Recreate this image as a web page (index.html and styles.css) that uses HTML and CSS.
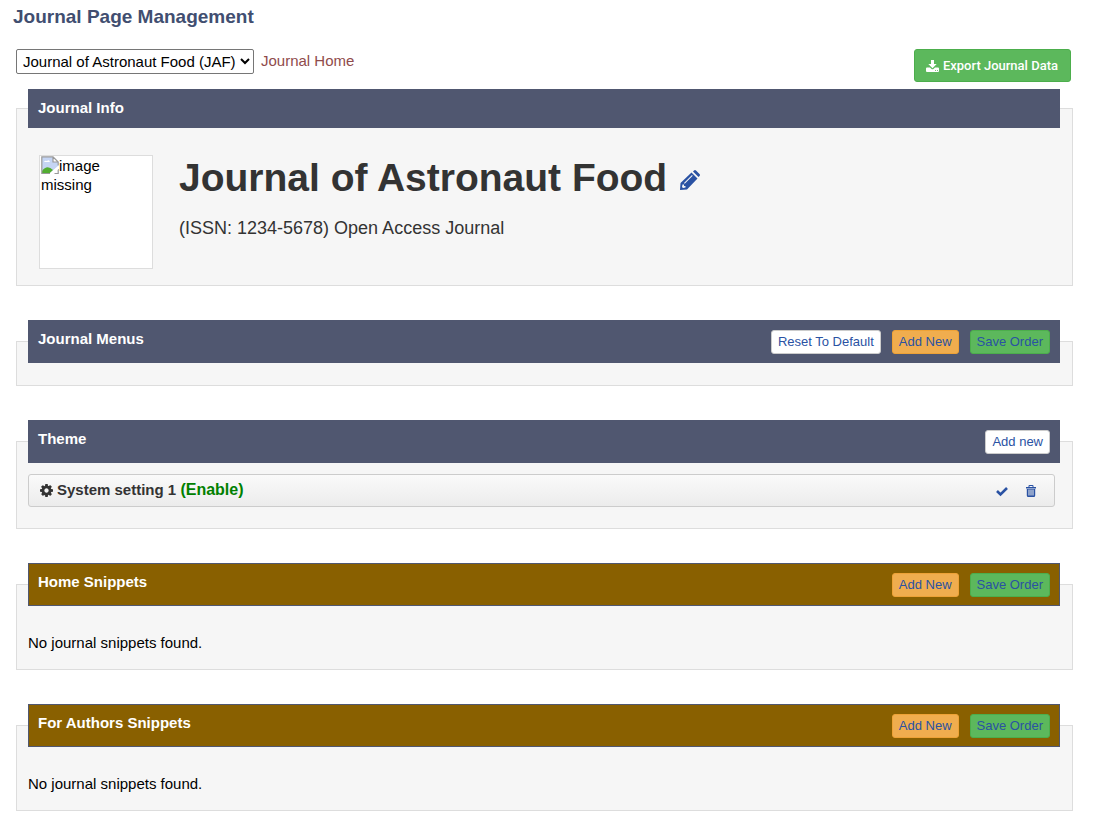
FILE: index.html
```html
<!DOCTYPE html>
<html lang="en">
<head>
<meta charset="utf-8">
<title>Journal Page Management</title>
<link rel="stylesheet" href="styles.css">
</head>
<body>
<main class="page">
  <h2 class="page-title">Journal Page Management</h2>
  <div class="toolbar">
    <select class="journal-select" aria-label="Journal"><option>Journal of Astronaut Food (JAF)</option></select>
    <a class="home-link" href="#">Journal Home</a>
    <button class="btn-export" type="button">
      <svg class="icon-download" viewBox="0 0 13 12" aria-hidden="true"><path fill="currentColor" fill-rule="evenodd" d="M5 0h3v4h2.700L6.500 8.200 2.300 4H5zM1 7.500h3l1.300 1.300q1.200 1 2.400 0L9 7.500h3q1 0 1 1V11q0 1-1 1H1q-1 0-1-1V8.500q0-1 1-1zM9 10v1h.8v-1zM11 10v1h.8v-1z"/></svg>
      Export Journal Data
    </button>
  </div>

  <fieldset class="panel">
    <legend class="panel-head panel-head-plain"><span class="bar"><span>Journal Info</span></span></legend>
    <div class="info">
      <div class="cover">
        <svg class="icon-broken" viewBox="0 0 18 18" role="img" aria-label="Broken image"><path d="M1 1h11l5 5v4L9 17H1z" fill="#c5d5f4"/><path d="M3 6q1-2 3-1 2-2 3 1z" fill="#fff"/><path d="M1 17v-2q5-7 11-1l-3 3z" fill="#52ad32"/><path d="M12 1v5h5z" fill="#fff"/><path d="M9 17.500H.8V.8H12l5.200 5.200v3.500M12 1v5h5M13.500 17.500h3.700v-4.500" fill="none" stroke="#999" stroke-width="1.200"/><path d="M9 17l8.500-7v3L13 17z" fill="#fff"/></svg>image missing
      </div>
      <div>
        <h1 class="journal-name">Journal of Astronaut Food
          <a class="edit" href="#" aria-label="Edit journal"><svg class="icon-pencil" viewBox="0 0 20 20" aria-hidden="true"><path fill="currentColor" fill-rule="evenodd" d="M0 20l.5-7L11.500 2.500l6 6L7 19.500zM13 1.500l1-1q1-1 2 0l3.500 3.500q1 1 0 2l-1 1zM2.500 14.500L2 17l1 1 2.500-.5V16H4v-1.500zM4 13l8-8 .7.700-8 8z"/></svg></a></h1>
        <p class="issn">(ISSN: 1234-5678) Open Access Journal</p>
      </div>
    </div>
  </fieldset>

  <fieldset class="panel">
    <legend class="panel-head"><span class="bar"><span>Journal Menus</span>
      <span class="actions"><button class="btn" type="button">Reset To Default</button><button class="btn btn-add" type="button">Add New</button><button class="btn btn-save" type="button">Save Order</button></span></span></legend>
    <div class="empty"></div>
  </fieldset>

  <fieldset class="panel">
    <legend class="panel-head"><span class="bar"><span>Theme</span>
      <span class="actions"><button class="btn" type="button">Add new</button></span></span></legend>
    <div class="setting">
      <svg class="icon-cog" viewBox="0 0 1536 1536" aria-hidden="true"><path fill="currentColor" d="M1024 768q0-106-75-181t-181-75-181 75-75 181 75 181 181 75 181-75 75-181zm512-109v222q0 12-8 23t-20 13l-185 28q-19 54-39 91 35 50 107 138 10 12 10 25t-9 23q-27 37-99 108t-94 71q-12 0-26-9l-138-108q-44 23-91 38-16 136-29 186-7 28-36 28H657q-14 0-24.500-8.500T621 1506l-28-184q-49-16-90-37l-141 107q-10 9-25 9-14 0-25-11-126-114-165-168-7-10-7-23 0-12 8-23 15-21 51-66.500t54-70.500q-27-50-41-99L29 913q-13-2-21-12.500T0 877V655q0-12 8-23t19-13l186-28q14-46 39-92-40-57-107-138-10-12-10-24 0-10 9-23 26-36 98.500-107.500T337 135q13 0 26 10l138 107q44-23 91-38 16-136 29-186 7-28 36-28h222q14 0 24.500 8.500T915 30l28 184q49 16 90 37l142-107q9-9 24-9 13 0 25 10 129 119 165 170 7 8 7 22 0 12-8 23-15 21-51 66.500t-54 70.500q26 50 41 98l183 28q13 2 21 12.500t8 23.500z"/></svg>
      <strong class="setting-name">System setting 1 <span class="enabled">(Enable)</span></strong>
      <span class="setting-actions">
        <a href="#" aria-label="Enable"><svg class="icon-small" viewBox="0 0 12 12" aria-hidden="true"><path d="M1 6l3.500 3.500L11 3" fill="none" stroke="currentColor" stroke-width="2.600"/></svg></a>
        <a href="#" aria-label="Delete"><svg class="icon-small" viewBox="0 0 12 12" aria-hidden="true"><path fill="currentColor" fill-rule="evenodd" d="M1 2h2.500V1q0-1 1-1h3q1 0 1 1v1H11v1.500H1zM4.500 1v1h3V1zM1.800 4h8.400v6.500q0 1.500-1.500 1.500H3.300q-1.500 0-1.500-1.500zM3.500 4.500v6h1v-6zM5.500 4.500v6h1v-6zM7.500 4.500v6h1v-6z"/></svg></a>
      </span>
    </div>
  </fieldset>

  <fieldset class="panel">
    <legend class="panel-head panel-head-snippets"><span class="bar"><span>Home Snippets</span>
      <span class="actions"><button class="btn btn-add" type="button">Add New</button><button class="btn btn-save" type="button">Save Order</button></span></span></legend>
    <p class="none">No journal snippets found.</p>
  </fieldset>

  <fieldset class="panel">
    <legend class="panel-head panel-head-snippets"><span class="bar"><span>For Authors Snippets</span>
      <span class="actions"><button class="btn btn-add" type="button">Add New</button><button class="btn btn-save" type="button">Save Order</button></span></span></legend>
    <p class="none">No journal snippets found.</p>
  </fieldset>
</main>
</body>
</html>
```

FILE: styles.css
```css
* { box-sizing: border-box; }
body {
  margin: 0;
  background: #fff;
  color: #000;
  font: 15px/19px "Liberation Sans", Arial, sans-serif;
}
.page { padding: 7px 42px 0 16px; }
.page-title {
  margin: 0 0 22px -3px;
  color: #414e70;
  font-size: 19px;
  line-height: 20px;
}
.toolbar {
  display: flex;
  align-items: flex-start;
  gap: 7px;
  margin-right: 2px;
}
.journal-select {
  height: 25px;
  padding: 0 0 0 2px;
  border: 1px solid #767676;
  border-radius: 2px;
  background: #fff;
  color: #000;
  font: inherit;
}
.home-link {
  padding-top: 2px;
  color: #8f4b4b;
  text-decoration: none;
}
.btn-export {
  display: flex;
  align-items: center;
  gap: 4px;
  height: 33px;
  margin-left: auto;
  padding: 0 12px 0 11px;
  border: 1px solid #4cae4c;
  border-radius: 3px;
  background: #5cb85c;
  color: #fff;
  font: 500 13px/18px Roboto, "Liberation Sans", sans-serif;
}
.icon-download { width: 13px; height: 12px; }
.panel {
  min-width: 0;
  margin: 0 0 34px;
  padding: 0 12px 0 11px;
  border: 1px solid #ddd;
  background: #f6f6f6;
}
.toolbar + .panel { margin-top: 7px; }
.panel-head {
  width: 100%;
  padding: 9px 9px 8px;
  border: 1px solid #505770;
  background: #505770;
  color: #fff;
  font-weight: bold;
}
.panel-head-plain { padding: 9px 9px 11px; }
.panel-head-snippets { background: #896000; }
.bar {
  display: flex;
  align-items: flex-start;
  justify-content: space-between;
  line-height: 17px;
}
.actions { display: flex; gap: 11px; }
.btn {
  height: 24px;
  padding: 0 6px;
  border: 1px solid #ccc;
  border-radius: 3px;
  background: #fff;
  color: #2a52a3;
  font: 13px/18px "Liberation Sans", Arial, sans-serif;
}
.btn-add { border-color: #eea236; background: #f0ad4e; }
.btn-save { border-color: #4cae4c; background: #5cb85c; }
.info {
  display: flex;
  gap: 26px;
  padding: 27px 11px 16px;
}
.cover {
  width: 114px;
  height: 114px;
  padding: 0 1px;
  border: 1px solid #ddd;
  background: #fff;
}
.icon-broken { width: 18px; height: 18px; vertical-align: top; }
.journal-name {
  margin: 0;
  color: #333;
  font-size: 39px;
  line-height: 46px;
}
.edit { margin-left: 2px; color: #2a52a3; }
.icon-pencil { width: 20px; height: 20px; vertical-align: 1px; }
.issn {
  margin: 16px 0 0;
  color: #333;
  font-size: 18px;
  line-height: 22px;
}
.empty { height: 22px; }
.setting {
  display: flex;
  align-items: center;
  gap: 4px;
  height: 33px;
  margin: 11px 5px 21px 0;
  padding: 0 17px 0 11px;
  border: 1px solid #ccc;
  border-radius: 3px;
  background: linear-gradient(#fafafa, #ececec);
  color: #333;
}
.setting-name { padding-bottom: 2px; }
.icon-cog { width: 13px; height: 13px; }
.enabled { color: #008000; font-size: 16px; }
.setting-actions { display: flex; gap: 17px; margin-left: auto; }
.setting-actions a { display: flex; color: #2a52a3; }
.icon-small { width: 12px; height: 12px; }
.none { margin: 0; padding: 27px 0 17px; }
```
